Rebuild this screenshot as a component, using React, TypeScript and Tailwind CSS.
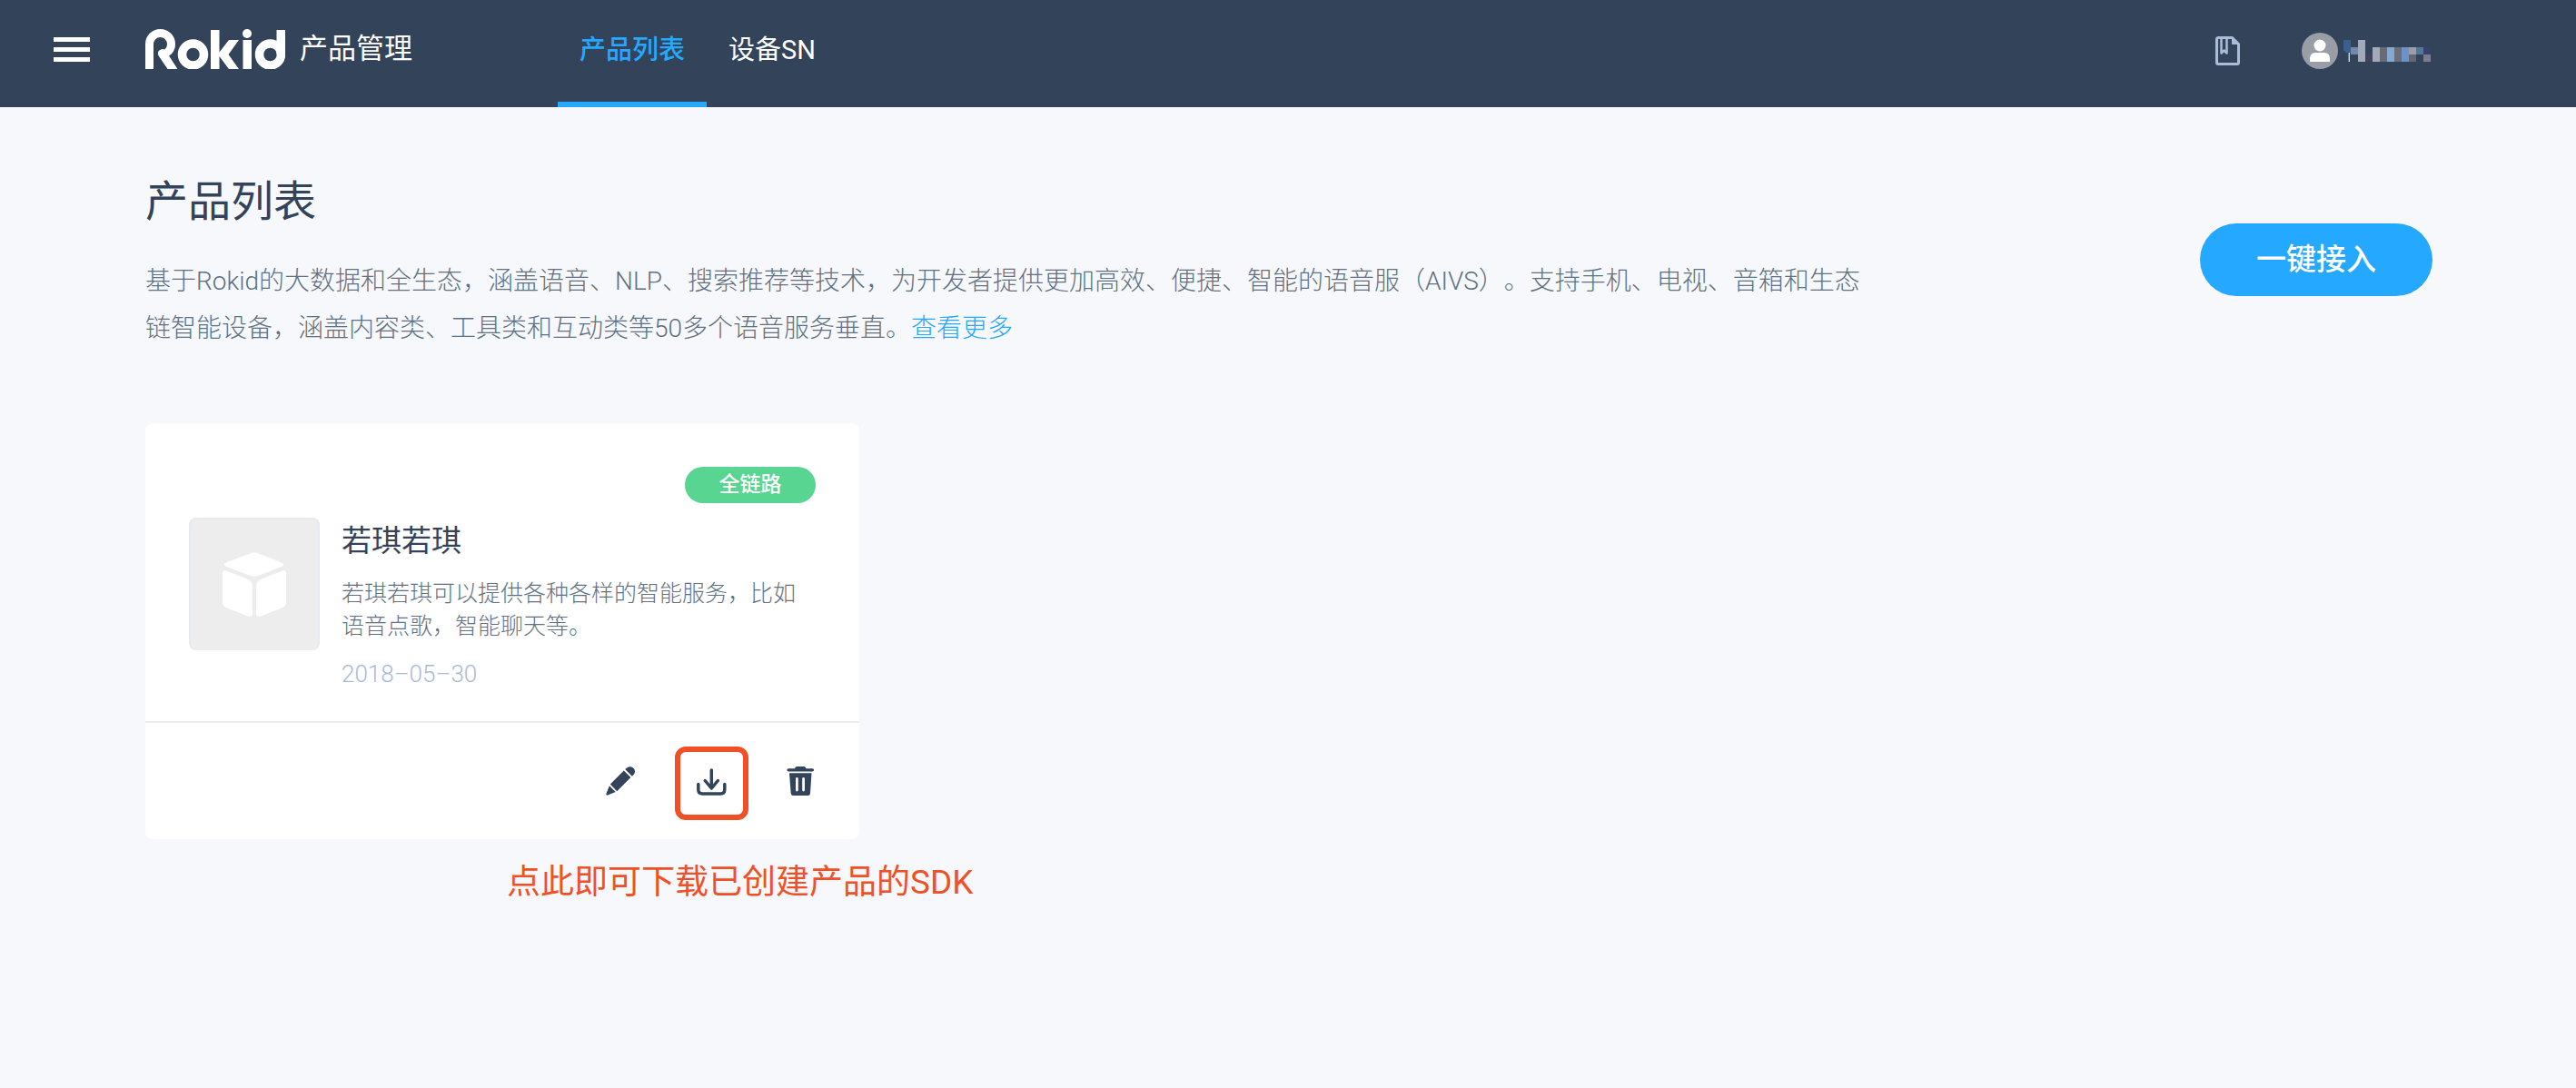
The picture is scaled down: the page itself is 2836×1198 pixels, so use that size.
const mosaic: { x: number; y: number; w: number; h: number; fill: string }[] = [
  { x: 0, y: 6, w: 8, h: 12, fill: '#3b5f90' },
  { x: 2, y: 18, w: 6, h: 2, fill: '#3b5f90' },
  { x: 5, y: 20, w: 1, h: 10, fill: '#5b86bb' },
  { x: 6, y: 20, w: 1, h: 10, fill: '#d5dbe6' },
  { x: 8, y: 14, w: 8, h: 8, fill: '#7488b0' },
  { x: 16, y: 6, w: 8, h: 24, fill: '#a0aaba' },
  { x: 24, y: 22, w: 8, h: 8, fill: '#3f4258' },
  { x: 32, y: 14, w: 8, h: 16, fill: '#a0aaba' },
  { x: 40, y: 14, w: 8, h: 16, fill: '#6a6a76' },
  { x: 48, y: 14, w: 8, h: 16, fill: '#84a9d3' },
  { x: 56, y: 14, w: 8, h: 16, fill: '#6a6f7b' },
  { x: 64, y: 14, w: 8, h: 16, fill: '#6c92c7' },
  { x: 72, y: 14, w: 8, h: 8, fill: '#9b9dab' },
  { x: 72, y: 22, w: 8, h: 8, fill: '#666675' },
  { x: 80, y: 14, w: 8, h: 8, fill: '#547797' },
  { x: 88, y: 14, w: 8, h: 8, fill: '#334272' },
  { x: 88, y: 22, w: 8, h: 8, fill: '#7b7c8e' },
];

function Logo() {
  return (
    <svg width="154" height="44" viewBox="0 0 154 44" fill="none" aria-label="Rokid" role="img">
      <path d="M4.5 44V16.500a12 12 0 0 1 24 0c0 6-4 10.500-10 11" stroke="#fff" strokeWidth="9" />
      <path d="M14 26.500c0-3 3-4.500 6-4.500l6 7.500 9.500 14.500h-11L15 30c-.7-1-1-2-1-3.500Z" fill="#fff" />
      <circle cx="52.500" cy="28" r="12" stroke="#fff" strokeWidth="9.500" />
      <path d="M72 1h9.500v24.500L92 12h11L91.500 28 103 44H92L81.500 30v14H72Z" fill="#fff" />
      <circle cx="112" cy="5" r="5" fill="#fff" />
      <path d="M107.500 12h9.500v32h-9.500Z" fill="#fff" />
      <circle cx="137.500" cy="28" r="12" stroke="#fff" strokeWidth="9.500" />
      <path d="M144.500 1h9.500v27h-9.500Z" fill="#fff" />
    </svg>
  );
}

function Header() {
  return (
    <header className="flex h-[118px] items-center bg-[#334359] pr-[158px] pl-[59px] text-white">
      <button type="button" aria-label="菜单" className="mb-[10px] flex w-10 flex-col gap-[6px]">
        <span className="h-[5px] w-full bg-white" />
        <span className="h-[5px] w-full bg-white" />
        <span className="h-[5px] w-full bg-white" />
      </button>
      <a href="#home" className="mb-[10px] ml-[61px] flex items-center gap-4">
        <Logo />
        <span className="text-[31px] leading-[46px]">产品管理</span>
      </a>
      <nav className="ml-40 flex h-full text-[29px] leading-[110px]">
        <a href="#products" className="border-b-[6px] border-[#25a8ff] px-6 font-medium text-[#25a8ff]">
          产品列表
        </a>
        <a href="#devices" className="px-6 font-normal">
          设备SN
        </a>
      </nav>
      <div className="mb-[6px] ml-auto flex items-center">
        <button type="button" aria-label="文档" className="mr-[68px]">
          <svg width="27" height="32" viewBox="0 0 27 32" fill="none" stroke="#a9bcd8" strokeWidth="3" strokeLinejoin="round">
            <path d="M3 1.500h15.500l7 7V29a1.500 1.500 0 0 1-1.500 1.500H3A1.500 1.500 0 0 1 1.500 29V3A1.500 1.500 0 0 1 3 1.500Z" />
            <path d="M18.500 1.500v7h7Z" fill="#a9bcd8" strokeWidth="1" />
            <path d="M6.500 2v16.500l3-3 3 3V2" strokeWidth="2.500" />
          </svg>
        </button>
        <button type="button" aria-label="账户" className="flex items-center gap-[6px]">
          <svg width="40" height="40" viewBox="0 0 40 40">
            <circle cx="20" cy="20" r="20" fill="#999da6" />
            <circle cx="20" cy="14" r="6.500" fill="#fff" />
            <path d="M9 32v-3c0-4 2-7 6-7h10c4 0 6 3 6 7v3Z" fill="#fff" />
          </svg>
          <svg width="98" height="36" viewBox="0 0 98 36" shapeRendering="crispEdges">
            {mosaic.map((b) => (
              <rect key={`${b.x}-${b.y}`} x={b.x} y={b.y} width={b.w} height={b.h} fill={b.fill} />
            ))}
          </svg>
        </button>
      </div>
    </header>
  );
}

function ProductCard() {
  return (
    <article className="w-[786px] max-w-full rounded-lg bg-white">
      <div className="border-b-2 border-[#ededed] px-12 pt-12 pb-8">
        <div className="flex justify-end">
          <span className="w-36 rounded-full bg-[#58d591] text-center text-[23px] leading-10 font-medium text-white">
            全链路
          </span>
        </div>
        <div className="mt-4 flex items-start gap-6">
          <div className="flex h-[146px] w-36 shrink-0 items-center justify-center rounded-lg border-x-2 border-t-2 border-[#e6eaee] bg-[#ededed]">
            <svg width="70" height="72" viewBox="0 0 70 72" fill="#fff">
              <path d="M30.500 1.200q4.500-1.700 9 0L65 11.500q4.500 2 0 4.200L40 25.800q-5 1.800-10 0L4 15.700q-4.500-2.200 0-4.200Z" />
              <path d="M0 23.500q0-4.500 4-3L26 29q7 3 7 9v29q0 5-5 3.500L5 61.500q-5-2-5-6.500Z" />
              <path d="M70 23.500q0-4.500-4-3L44 29q-7 3-7 9v29q0 5 5 3.500l23-9q5-2 5-6.500Z" />
            </svg>
          </div>
          <div>
            <h2 className="text-[33px] leading-[52px] font-normal text-[#334359]">若琪若琪</h2>
            <p className="mt-[14px] text-[25px] leading-9 font-light text-[#5f7183]">
              若琪若琪可以提供各种各样的智能服务，比如语音点歌，智能聊天等。
            </p>
            <time dateTime="2018-05-30" className="mt-4 mb-[2px] block text-[26px] leading-9 font-light text-[#a9bad3]">
              2018–05–30
            </time>
          </div>
        </div>
      </div>
      <div className="flex h-32 items-center justify-end gap-[42px] pt-1 pr-12 text-[#334359]">
        <button type="button" aria-label="编辑">
          <svg width="34" height="36" viewBox="0 0 34 36" fill="currentColor">
            <path d="M19.800 4.500 27.400 12 12.300 27.200 4.800 19.600Z" />
            <path d="M3.900 21.200 10.700 28.100 2 31.600Q0 32 .4 30Z" />
            <path d="M21.200 3.100C23 1.200 24.700.2 26.500.2 29.800.2 32 2.800 32 5.500c0 2-1.300 3.600-3.100 5.200Z" />
          </svg>
        </button>
        <button type="button" aria-label="下载SDK" className="rounded-xl border-[6px] border-[#f05026] p-[18px]">
          <svg
            width="33"
            height="33"
            viewBox="0 0 33 33"
            fill="none"
            stroke="currentColor"
            strokeWidth="3.500"
            strokeLinecap="round"
            strokeLinejoin="round"
          >
            <path d="M16.300 2v20M9.200 13.500l7.100 8.500 7.100-8.500" />
            <path d="M1.800 17.500v6c0 3 1.500 4.500 4.500 4.500h20c3 0 4.500-1.500 4.500-4.500v-6" />
          </svg>
        </button>
        <button type="button" aria-label="删除">
          <svg width="32" height="36" viewBox="0 0 32 36" fill="currentColor">
            <path d="M2 2.200h7C9.500.6 10.500 0 12 0h6.500c1.500 0 2.500.6 3 2.200h7a1.600 1.600 0 0 1 0 3.200H2a1.600 1.600 0 0 1 0-3.200Z" />
            <path
              fillRule="evenodd"
              d="M3 7.300h24.500L26 29.500q-.2 2.500-2.500 2.500H7.200q-2.300 0-2.500-2.500ZM10 13.500v12.500a1.400 1.400 0 0 0 2.800 0V13.500a1.400 1.400 0 0 0-2.800 0Zm7.200 0v12.500a1.400 1.400 0 0 0 2.800 0V13.500a1.400 1.400 0 0 0-2.800 0Z"
            />
          </svg>
        </button>
      </div>
    </article>
  );
}

export default function App() {
  return (
    <div className="min-h-screen bg-[#f7f8fc] font-[Roboto,'Noto_Sans_CJK_SC',sans-serif] [text-spacing-trim:space-all]">
      <Header />
      <main className="pr-[158px] pl-40">
        <section className="flex items-start justify-between pt-[66px]">
          <div className="w-[1900px] max-w-full">
            <h1 className="text-[47px] leading-[76px] text-[#334359]">产品列表</h1>
            <p className="mt-6 text-[28px] leading-[52px] font-light text-[#5f7183]">
              基于Rokid的大数据和全生态，涵盖语音、NLP、搜索推荐等技术，为开发者提供更加高效、便捷、智能的语音服（AIVS）。支持手机、电视、音箱和生态链智能设备，涵盖内容类、工具类和互动类等50多个语音服务垂直。
              <a href="#more" className="text-[#25a8ff]">
                查看更多
              </a>
            </p>
          </div>
          <button type="button" className="mt-[62px] h-20 w-64 shrink-0 rounded-full bg-[#25a8ff] text-[33px] font-medium text-white">
            一键接入
          </button>
        </section>
        <section className="pt-[78px]">
          <ProductCard />
          <p className="ml-[398px] pt-5 text-[37px] leading-[56px] text-[#f05026]">点此即可下载已创建产品的SDK</p>
        </section>
      </main>
    </div>
  );
}
